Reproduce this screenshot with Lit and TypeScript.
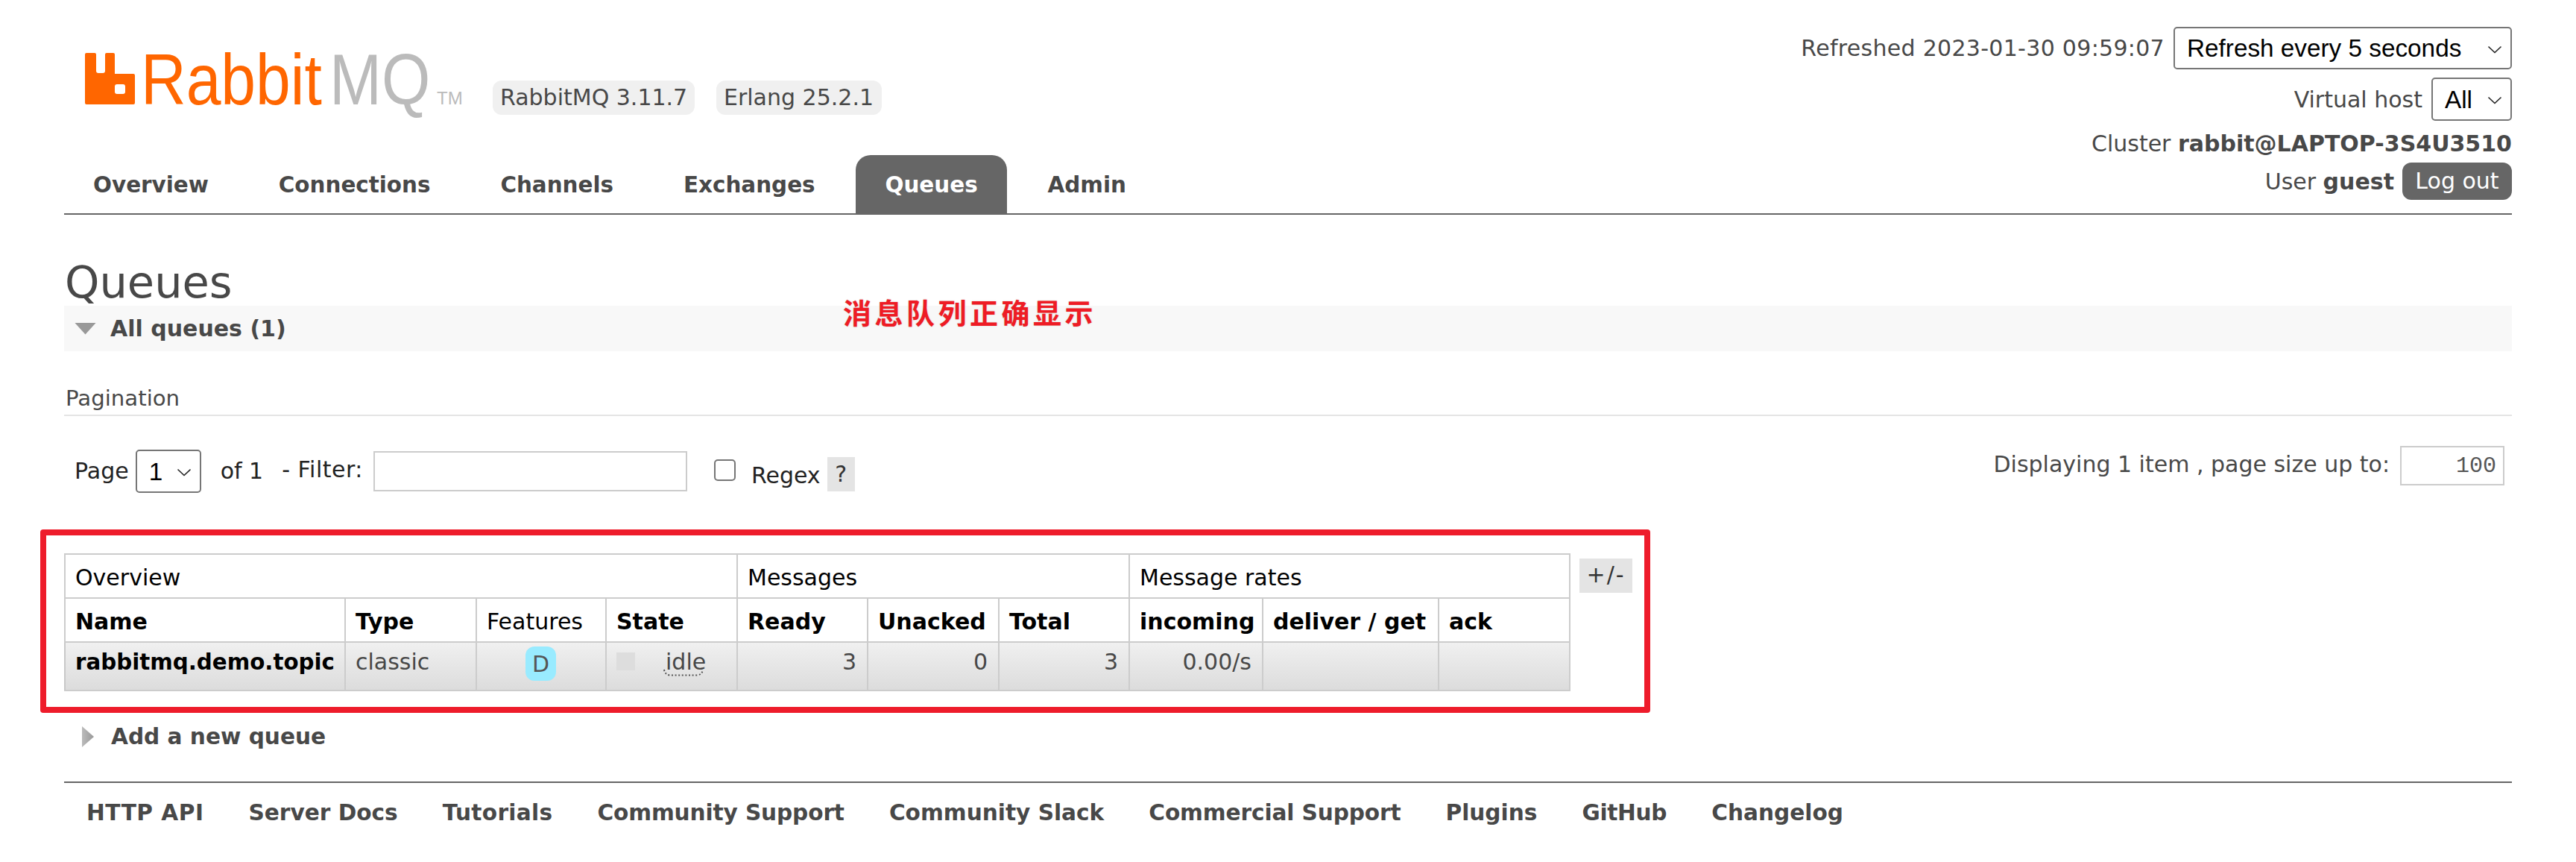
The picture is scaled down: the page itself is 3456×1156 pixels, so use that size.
import { LitElement, html, css } from "lit";
import { customElement } from "lit/decorators.js";

const chevron = html`<svg class="chev" width="20" height="11" viewBox="0 0 20 11"><path d="M1.5 1.5 L10 9.5 L18.5 1.5" fill="none" stroke="#222" stroke-width="1.6"/></svg>`;

@customElement("app-root")
export class AppRoot extends LitElement {
  static styles = css`
    :host { display: block; position: relative; width: 3456px; height: 1156px; background: #fff; overflow: hidden;
      font-family: "DejaVu Sans", sans-serif; font-size: 30px; color: #484848; }
    * { box-sizing: border-box; }
    .page { padding: 0 86px; }
    header { display: grid; grid-template-columns: 1fr auto; height: 288px; border-bottom: 2px solid #666; }
    .brand { display: flex; flex-direction: column; justify-content: space-between; }
    .logo-row { display: flex; align-items: flex-start; padding: 71px 0 0 30px; }
    .logo { display: block; flex: none; overflow: visible; }
    .badge { background: #f0f0f0; border-radius: 12px; height: 46px; line-height: 46px; padding: 0 10px; font-size: 30px; margin-top: 37px; white-space: nowrap; }
    .badge.a { margin-left: 39px; width: 271px; }
    .badge.b { margin-left: 29px; width: 222px; }
    nav { display: flex; height: 78px; font-size: 29.4px; }
    nav a { padding: 0 39px; margin-right: 15.9px; line-height: 81px; font-weight: bold; color: #484848; border-radius: 20px 20px 0 0; white-space: nowrap; }
    nav a.on { background: #666; color: #fff; }
    .status { display: flex; flex-direction: column; align-items: flex-end; padding-top: 36px; }
    .line { display: flex; align-items: center; justify-content: flex-end; white-space: nowrap; gap: 12px; }
    .l1 { height: 57px; letter-spacing: 0.3px; }
    .l2 { height: 58px; margin-top: 11px; }
    .l3 { height: 40px; margin-top: 10px; }
    .l4 { height: 50px; margin-top: 6px; gap: 11px; }
    .sel { position: relative; display: inline-block; flex: none; letter-spacing: 0; }
    .sel select { appearance: none; -webkit-appearance: none; display: block; background: #fff; border: 2px solid #767676; border-radius: 5px; color: #000; font-family: "Liberation Sans", Arial, sans-serif; font-size: 33.3px; padding: 0 0 0 16px; height: 100%; width: 100%; margin: 0; outline: none; }
    .chev { position: absolute; right: 13px; top: 50%; margin-top: -4px; pointer-events: none; }
    .s-refresh { width: 454px; height: 57px; }
    .s-all { width: 108px; height: 58px; }
    .s-page { width: 88px; height: 58px; margin-left: 9px; }
    b { font-weight: bold; }
    .logout { background: #666; color: #fff; height: 50px; line-height: 50px; width: 147px; text-align: center; border-radius: 12px; }
    h1 { margin: 0; font-weight: normal; font-size: 59px; height: 122px; padding: 56px 0 0 1px; line-height: 70px; color: #484848; }
    .section { background: #f8f8f8; height: 61px; display: flex; align-items: center; font-weight: bold; }
    .tri-down { width: 29px; height: 16px; margin-left: 14px; margin-right: 19px; background: #999; clip-path: polygon(0 0, 100% 0, 50% 100%); }
    .pag-title { margin-top: 44px; height: 43px; padding-left: 2px; line-height: 38px; font-size: 29.2px; border-bottom: 2px solid #e4e4e4; }
    .pager { display: flex; justify-content: space-between; height: 105px; }
    .pg-left { display: flex; align-items: flex-start; color: #222; padding: 45px 0 0 14px; white-space: nowrap; }
    .pg-left .t { line-height: 58px; }
    .of { margin-left: 26px; }
    .flt { margin-left: 25px; line-height: 54px !important; letter-spacing: 0.5px; }
    .rgx { margin-left: 21px; padding-top: 6px; }
    .cb { appearance: none; -webkit-appearance: none; margin: 13px 0 0 36px; width: 29px; height: 29px; border: 2px solid #767676; border-radius: 5px; background: #fff; flex: none; }
    .filter { width: 421px; height: 54px; margin: 2px 0 0 14px; border: 2px solid #ccc; background: #fff; padding: 0; outline: none; flex: none; }
    .help { background: #e4e4e4; width: 37px; height: 46px; line-height: 46px; text-align: center; margin: 10px 0 0 9px; color: #333; }
    .pg-right { display: flex; align-items: flex-start; padding: 40px 10px 0 0; white-space: nowrap; gap: 14px; }
    .pg-right .t { line-height: 50px; }
    .size { width: 140px; height: 53px; border: 2px solid #ccc; background: #fff; text-align: right; padding: 0 9px; font-family: "Liberation Mono", monospace; font-size: 30px; color: #555; outline: none; }
    .tbl-wrap { display: flex; align-items: flex-start; margin-top: 79px; gap: 12px; }
    table { border-collapse: collapse; table-layout: fixed; width: 2019px; font-size: 30px; color: #000; flex: none; }
    th, td { border: 2px solid #ccc; padding: 0 14px 0 13px; white-space: nowrap; overflow: visible; text-align: left; }
    thead th { font-weight: normal; height: 59px; vertical-align: middle; padding-top: 3px; }
    thead tr.sub th { font-weight: bold; }
    thead tr.sub th.n { font-weight: normal; }
    td { height: 65px; vertical-align: top; padding-top: 8px; color: #484848; background: linear-gradient(#f0f0f0, #dcdcdc); border-top-width: 2px; border-left-color: #c8c8c8; line-height: 36px; }
    td.nm { font-weight: bold; color: #000; padding-right: 0; font-size: 29.3px; }
    td.r { text-align: right; }
    .c { text-align: center; }
    .d { display: inline-block; width: 41px; height: 46px; line-height: 48px; text-align: center; background: #99ebff; border-radius: 12px; color: #555; margin-top: -3px; }
    .state { display: flex; align-items: flex-start; }
    .dot { width: 25px; height: 24px; background: #ddd; margin-top: 5px; margin-right: 41px; flex: none; }
    .idle { position: relative; display: inline-block; line-height: 36px; }
    .dots { position: absolute; left: -3px; top: 27px; overflow: visible; pointer-events: none; }
    .plus { background: #e4e4e4; width: 71px; height: 46px; line-height: 44px; text-align: center; color: #333; margin-top: 7px; flex: none; letter-spacing: 2px; }
    .add { display: flex; align-items: center; height: 46px; margin-top: 38px; font-weight: bold; font-size: 29.6px; }
    .tri-right { width: 16px; height: 28px; margin-left: 24px; margin-right: 23px; background: linear-gradient(90deg, #bbb, #999); clip-path: polygon(0 0, 100% 50%, 0 100%); }
    footer { margin-top: 37px; border-top: 2px solid #666; display: flex; padding: 20px 0 0 30px; gap: 60px; font-weight: bold; font-size: 29.6px; line-height: 40px; white-space: nowrap; }
    footer a:nth-child(1) { letter-spacing: 0.5px; }
    footer a:nth-child(3) { letter-spacing: 0.3px; }
    footer a:nth-child(4), footer a:nth-child(6) { letter-spacing: -0.12px; }
    footer a:nth-child(8) { letter-spacing: -0.3px; }
    .note { position: absolute; left: 1131px; top: 396px; color: #ee1c25; font-family: "Noto Sans CJK SC", sans-serif; font-weight: 700; font-size: 38px; line-height: 44px; letter-spacing: 4.5px; white-space: nowrap; text-shadow: 0 0 2px #ccc; }
    .box { position: absolute; left: 54px; top: 710px; width: 2160px; height: 246px; border: 8px solid #ee1c2b; border-radius: 4px; pointer-events: none; }
  `;

  render() {
    const tabs = ["Overview", "Connections", "Channels", "Exchanges", "Queues", "Admin"];
    const links = ["HTTP API", "Server Docs", "Tutorials", "Community Support", "Community Slack", "Commercial Support", "Plugins", "GitHub", "Changelog"];
    const cols = [376, 176, 174, 176, 175, 176, 175, 179, 236, 176];
    return html`
      <div class="page">
        <header>
          <div class="brand">
            <div class="logo-row">
              <svg class="logo" width="506" height="72" viewBox="116 71 506 72" role="img" aria-label="RabbitMQ">
                <path fill="#f60" fill-rule="evenodd" d="M118 71h9a2 2 0 0 1 2 2v22q0 3 3 3h6q3 0 3-3V73a2 2 0 0 1 2-2h9a2 2 0 0 1 2 2v26h25a2 2 0 0 1 2 2v37a2 2 0 0 1-2 2h-63a2 2 0 0 1-2-2V73a2 2 0 0 1 2-2zM157 113a3 3 0 0 0-3 3v7a3 3 0 0 0 3 3h8a3 3 0 0 0 3-3v-7a3 3 0 0 0-3-3z"/>
                <text transform="translate(189 140) scale(.875 1)" fill="#f60" font-family="Liberation Sans" font-size="96">Rabbit</text>
                <text transform="translate(442 140) scale(.875 1)" fill="#bbb" font-family="Liberation Sans" font-size="96">MQ</text>
                <text x="586" y="140" fill="#bbb" font-family="Liberation Sans" font-size="24">TM</text>
              </svg>
              <span class="badge a">RabbitMQ 3.11.7</span>
              <span class="badge b">Erlang 25.2.1</span>
            </div>
            <nav>${tabs.map((t) => html`<a class=${t === "Queues" ? "on" : ""}>${t}</a>`)}</nav>
          </div>
          <div class="status">
            <div class="line l1">Refreshed 2023-01-30 09:59:07
              <span class="sel s-refresh"><select><option>Refresh every 5 seconds</option></select>${chevron}</span></div>
            <div class="line l2">Virtual host
              <span class="sel s-all"><select><option>All</option></select>${chevron}</span></div>
            <div class="line l3"><span>Cluster <b>rabbit@LAPTOP-3S4U3510</b></span></div>
            <div class="line l4"><span>User <b>guest</b></span><span class="logout">Log out</span></div>
          </div>
        </header>
        <h1>Queues</h1>
        <div class="section"><span class="tri-down"></span>All queues (1)</div>
        <div class="pag-title">Pagination</div>
        <div class="pager">
          <div class="pg-left">
            <span class="t">Page</span>
            <span class="sel s-page"><select><option>1</option></select>${chevron}</span>
            <span class="t of">of 1</span>
            <span class="t flt">- Filter:</span>
            <input class="filter" />
            <input class="cb" type="checkbox" />
            <span class="t rgx">Regex</span>
            <span class="help">?</span>
          </div>
          <div class="pg-right">
            <span class="t">Displaying 1 item , page size up to:</span>
            <input class="size" value="100" />
          </div>
        </div>
        <div class="tbl-wrap">
          <table>
            <colgroup>${cols.map((w) => html`<col style="width:${w}px" />`)}</colgroup>
            <thead>
              <tr><th colspan="4">Overview</th><th colspan="3">Messages</th><th colspan="3">Message rates</th></tr>
              <tr class="sub"><th>Name</th><th>Type</th><th class="n">Features</th><th>State</th><th>Ready</th><th>Unacked</th><th>Total</th><th>incoming</th><th>deliver / get</th><th>ack</th></tr>
            </thead>
            <tbody>
              <tr>
                <td class="nm">rabbitmq.demo.topic</td>
                <td>classic</td>
                <td class="c"><span class="d">D</span></td>
                <td><div class="state"><span class="dot"></span><span class="idle">idle<svg class="dots" width="54" height="10" viewBox="0 0 54 10"><path d="M1 1 Q2 8 9 8.5 H45 Q52 8 53 1" fill="none" stroke="#555" stroke-width="2" stroke-dasharray="2 2.6"/></svg></span></div></td>
                <td class="r">3</td><td class="r">0</td><td class="r">3</td><td class="r">0.00/s</td><td></td><td></td>
              </tr>
            </tbody>
          </table>
          <span class="plus">+/-</span>
        </div>
        <div class="add"><span class="tri-right"></span>Add a new queue</div>
        <footer>${links.map((l) => html`<a>${l}</a>`)}</footer>
      </div>
      <div class="note">消息队列正确显示</div>
      <div class="box"></div>
    `;
  }
}
